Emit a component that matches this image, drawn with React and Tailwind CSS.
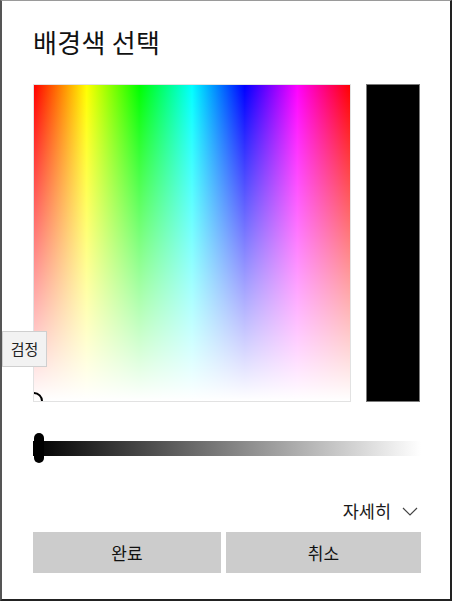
import React from "react";

export default function App() {
  return (
    <div
      className="relative w-[452px] h-[601px] bg-white border-l-2 border-r-2 border-b-2 border-t border-l-[#555] border-r-[#222] border-b-[#222] border-t-[#9a9a9a] overflow-hidden"
      style={{ fontFamily: '"Noto Sans CJK KR", "Noto Sans", sans-serif' }}
    >
      <div className="pl-[31px] pr-[29px]">
        <h1 className="pt-[24px] h-[83px] text-[26px] leading-[34px] text-[#111] font-normal tracking-[0.3px]">배경색 선택</h1>
        <div className="flex gap-[15px]">
          <div className="relative w-[318px] h-[318px] border border-[#e2e2e2] overflow-hidden">
            <div className="absolute inset-0 bg-[linear-gradient(to_right,#ff0000_0%,#ffff00_16.67%,#00ff00_33.33%,#00ffff_50%,#0000ff_66.67%,#ff00ff_83.33%,#ff0000_100%)]" />
            <div className="absolute inset-0 bg-[linear-gradient(to_bottom,rgba(255,255,255,0)_0%,#ffffff_100%)]" />
            <div className="absolute left-[-9px] bottom-[-9px] w-[18px] h-[18px] rounded-full border-2 border-black" />
          </div>
          <div className="w-[54px] h-[318px] bg-black border border-[#7a7a7a]" />
        </div>
        <div className="relative mt-[31px] h-[30px] flex items-center">
          <div className="w-full h-[15px] bg-[linear-gradient(to_right,#000000,#ffffff)]" />
          <div className="absolute left-[1px] top-0 w-[10px] h-[30px] rounded-full bg-black" />
        </div>
        <div className="mt-[38px] flex justify-end items-center gap-[11px] pr-[3px] h-[20px]">
          <span className="text-[17.5px] leading-[20px] text-[#1a1a1a]">자세히</span>
          <svg width="16" height="9" viewBox="0 0 16 9" fill="none">
            <path d="M1 1 L8 8 L15 1" stroke="#444" strokeWidth="1.2" />
          </svg>
        </div>
        <div className="mt-[11px] flex gap-[5px]">
          <button className="w-[188px] h-[41px] bg-[#cccccc] text-[17px] text-[#111] flex items-center justify-center">완료</button>
          <button className="flex-1 h-[41px] bg-[#cccccc] text-[17px] text-[#111] flex items-center justify-center">취소</button>
        </div>
      </div>
      <div className="absolute left-0 top-[330px] w-[45px] h-[36px] bg-[#f2f2f2] border border-[#cfcfcf] flex items-center justify-center text-[15px] text-[#222]">
        검정
      </div>
    </div>
  );
}
